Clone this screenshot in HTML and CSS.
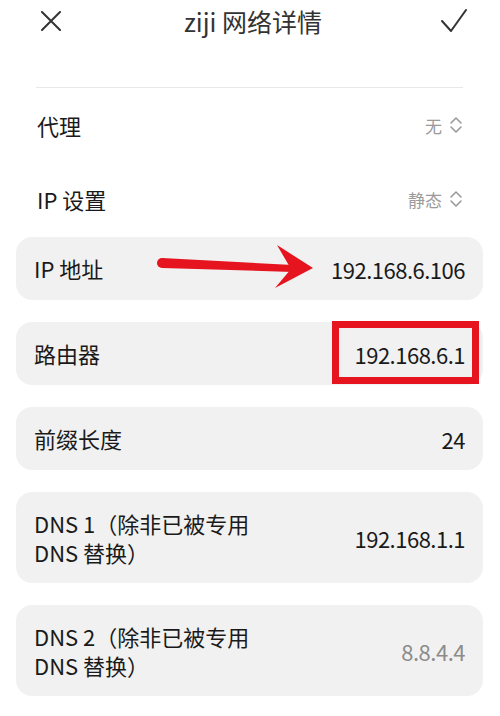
FILE: index.html
```html
<!DOCTYPE html>
<html lang="zh-CN">
<head>
<meta charset="utf-8">
<title>ziji 网络详情</title>
<link rel="stylesheet" href="styles.css">
</head>
<body>
<div class="screen">
  <header class="topbar">
    <svg class="icon-close" viewBox="0 0 20 20" width="20" height="20"><path d="M1 1 L19 19 M19 1 L1 19" stroke="#333" stroke-width="2" fill="none" stroke-linecap="round"/></svg>
    <h1 class="title">ziji 网络详情</h1>
    <svg class="icon-check" viewBox="0 0 26 24" width="26" height="24"><path d="M1 12 L10 22 L25 1" stroke="#333" stroke-width="2" fill="none" stroke-linecap="round" stroke-linejoin="round"/></svg>
  </header>

  <div class="plain-list">
    <div class="plain-row">
      <span class="label">代理</span>
      <span class="select">无<svg class="updown" viewBox="0 0 14 20" width="14" height="20"><path d="M2 8 L7 3 L12 8 M2 12 L7 17 L12 12" stroke="#9a9a9a" stroke-width="1.6" fill="none" stroke-linecap="round" stroke-linejoin="round"/></svg></span>
    </div>
    <div class="plain-row">
      <span class="label">IP 设置</span>
      <span class="select">静态<svg class="updown" viewBox="0 0 14 20" width="14" height="20"><path d="M2 8 L7 3 L12 8 M2 12 L7 17 L12 12" stroke="#9a9a9a" stroke-width="1.6" fill="none" stroke-linecap="round" stroke-linejoin="round"/></svg></span>
    </div>
  </div>

  <div class="cards">
    <div class="card">
      <span class="label">IP 地址</span>
      <span class="value">192.168.6.106</span>
    </div>
    <div class="card">
      <span class="label">路由器</span>
      <span class="value">192.168.6.1</span>
    </div>
    <div class="card">
      <span class="label">前缀长度</span>
      <span class="value">24</span>
    </div>
    <div class="card card-tall">
      <span class="label">DNS 1（除非已被专用<br>DNS 替换）</span>
      <span class="value">192.168.1.1</span>
    </div>
    <div class="card card-tall">
      <span class="label">DNS 2（除非已被专用<br>DNS 替换）</span>
      <span class="value value-muted">8.8.4.4</span>
    </div>
  </div>

  <svg class="annot-arrow" viewBox="0 0 165 55" width="165" height="55">
    <circle cx="7" cy="23" r="5" fill="#e5141f"/>
    <polygon points="7,18 138,25 138,32 7,28" fill="#e5141f"/>
    <polygon points="122,5 158,28 120,48 136,29" fill="#e5141f"/>
  </svg>
  <div class="annot-box"></div>
</div>
</body>
</html>
```

FILE: styles.css
```css
* { box-sizing: border-box; }

html, body {
  margin: 0;
  padding: 0;
  background: #ffffff;
}

body {
  font-family: "Noto Sans CJK SC", "Noto Sans", sans-serif;
  color: #1c1c1c;
}

.screen {
  position: relative;
  width: 500px;
  height: 716px;
  overflow: hidden;
}

.topbar {
  height: 42px;
  display: flex;
  align-items: center;
  justify-content: space-between;
  padding: 0 33px 0 41px;
}

.title {
  margin: 0;
  font-size: 25px;
  font-weight: 400;
  color: #333;
  line-height: 1;
  position: relative;
  left: 2px;
}

.icon-close { display: block; }
.icon-check { display: block; margin-top: -1px; }

.plain-list {
  margin: 45px 37px 0 36px;
  border-top: 1px solid #e8e8e8;
}

.plain-row {
  height: 74px;
  display: flex;
  align-items: center;
  justify-content: space-between;
  padding: 0 0 0 1px;
}

.label {
  font-size: 22px;
  line-height: 29px;
  color: #1a1a1a;
}

.select {
  display: flex;
  align-items: center;
  gap: 7px;
  font-size: 17px;
  color: #9a9a9a;
}

.updown { display: block; }

.cards {
  margin: 1px 17px 0 16px;
  display: flex;
  flex-direction: column;
  gap: 22px;
}

.card {
  height: 63px;
  background: #f1f1f1;
  border-radius: 16px;
  display: flex;
  align-items: center;
  justify-content: space-between;
  padding: 0 18px 0 18px;
}

.card-tall {
  height: 91px;
}

.value {
  font-size: 22px;
  color: #1a1a1a;
  letter-spacing: -0.5px;
}

.value-muted {
  color: #8c8c8c;
}

.annot-arrow {
  position: absolute;
  left: 155px;
  top: 240px;
}

.annot-box {
  position: absolute;
  left: 332px;
  top: 321px;
  width: 147px;
  height: 63px;
  border: 7px solid #e5141f;
}
```
